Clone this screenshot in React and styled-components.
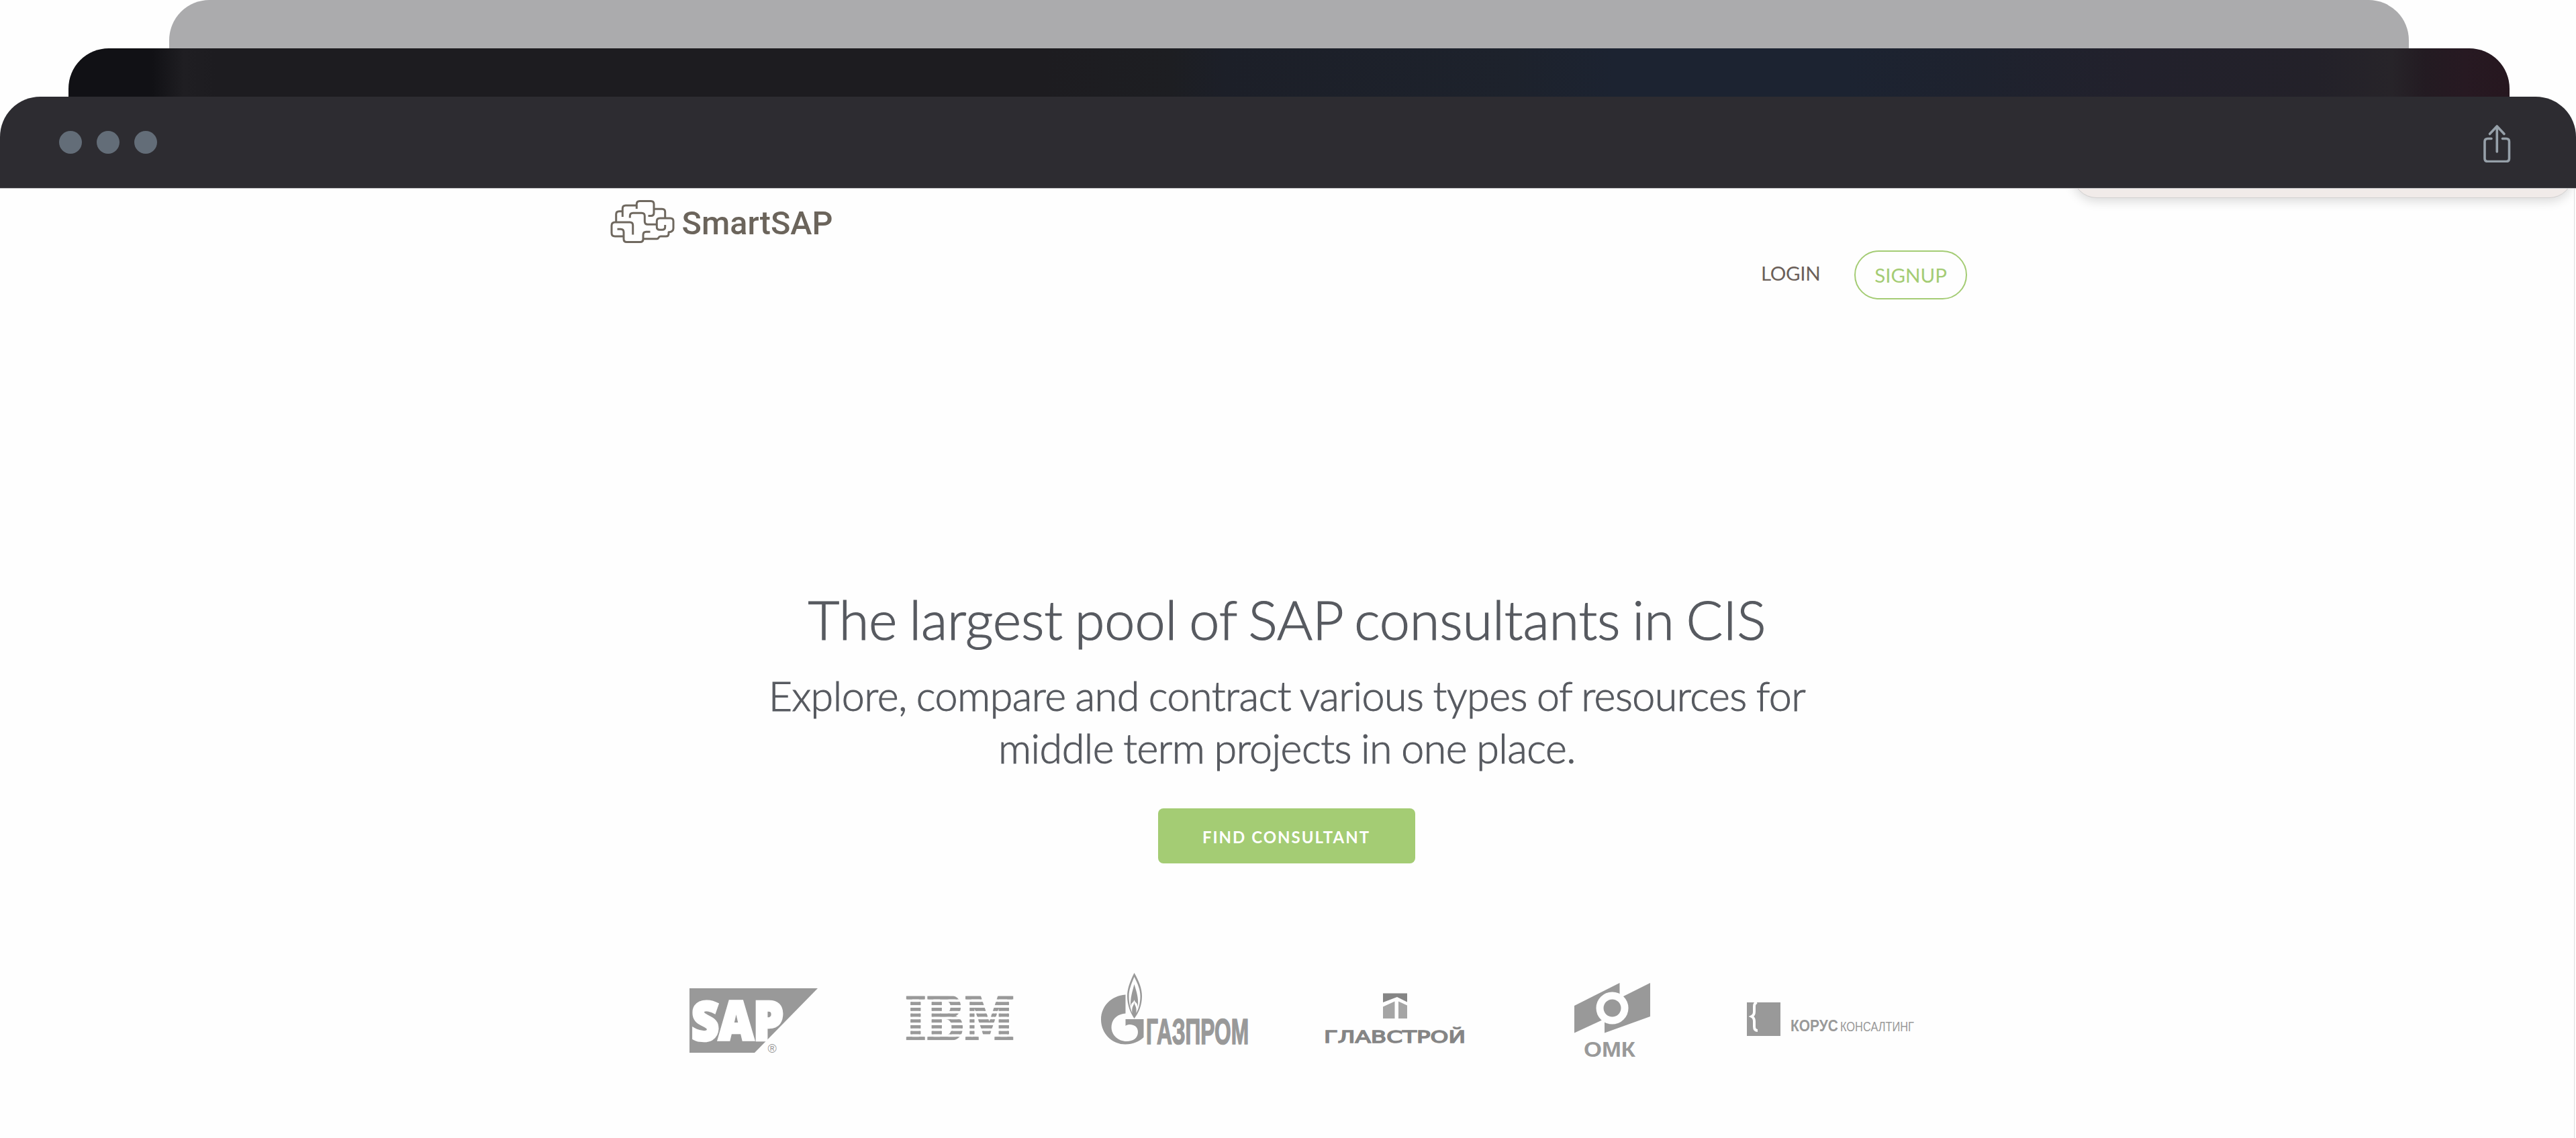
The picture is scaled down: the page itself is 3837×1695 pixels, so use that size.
import React from "react";
import styled, { createGlobalStyle } from "styled-components";

const GlobalStyle = createGlobalStyle`
  * { box-sizing: border-box; }
  html, body { margin: 0; padding: 0; background: #fff; }
  body { font-family: Lato, "Open Sans", sans-serif; overflow: hidden; }
`;

const Page = styled.div`
  width: 3837px;
  height: 1695px;
  display: flex;
  flex-direction: column;
  background: #fefefe;
  overflow: hidden;
`;

const BackTab = styled.div`
  height: 72px;
  flex: none;
  margin: 0 ${(p) => p.$right}px 0 ${(p) => p.$left}px;
  border-radius: 60px 60px 0 0;
  background: ${(p) => p.$fill};
`;

const darkBlend =
  "linear-gradient(90deg, #111115 0, #111115 125px, #1f1e22 172px, #1d1c20 220px, #1d1c20 1450px, #1d1e22 1640px, #1c1f28 1720px, #1d222c 2150px, #1c2331 2300px, #1c2331 2650px, #1e222e 2850px, #22212c 3080px, #232129 3350px, #272429 3460px, #231b22 3510px, #271922 3570px, #26171f 100%)";

const TitleBar = styled.header`
  height: 137px;
  flex: none;
  display: flex;
  align-items: center;
  justify-content: space-between;
  padding: 0 96px 0 88px;
  border-radius: 60px 60px 0 0;
  border-bottom: 1px solid #bdbdbf;
  background: #2d2c31;
  background-clip: padding-box;
`;

const Dots = styled.div`
  display: flex;
  gap: 22px;
`;

const Dot = styled.span`
  width: 34px;
  height: 34px;
  border-radius: 50%;
  background: #636d78;
`;

const ShareIcon = styled.svg`
  width: 44px;
  height: 60px;
  display: block;
`;

const Viewport = styled.main`
  position: relative;
  flex: 1;
  margin-right: 2px;
  border-right: 1px solid #dcdcdc;
  display: flex;
  flex-direction: column;
  overflow: hidden;
`;

const Popover = styled.div`
  position: absolute;
  top: -62px;
  left: 3087px;
  width: 746px;
  height: 76px;
  border: 1px solid #d2d0d0;
  border-radius: 36px;
  background: #f1ebe9;
  box-shadow: 0 5px 16px rgba(0, 0, 0, 0.14);
`;

const TopNav = styled.div`
  height: 170px;
  flex: none;
  display: flex;
  justify-content: space-between;
  padding: 0 904px 0 908px;
`;

const Brand = styled.a`
  display: block;
  padding-top: 15px;
`;

const Links = styled.nav`
  display: flex;
  align-items: flex-start;
  padding-top: 92px;
  gap: 54px;
`;

const NavLink = styled.a`
  margin-top: 16px;
  width: 85px;
  font-size: 29.5px;
  line-height: 36px;
  letter-spacing: -0.35px;
  color: #6b6059;
  white-space: nowrap;
`;

const SignupLink = styled.a`
  width: 168px;
  height: 73px;
  display: flex;
  align-items: center;
  justify-content: center;
  border: 2px solid #a4cc74;
  border-radius: 37px;
  font-size: 29.5px;
  letter-spacing: 0;
  color: #a4cc74;
`;

const Hero = styled.section`
  display: flex;
  flex-direction: column;
  align-items: center;
  padding-top: 421px;
`;

const Headline = styled.h1`
  margin: 0;
  font-size: 81px;
  font-weight: 300;
  line-height: 100px;
  letter-spacing: -0.1px;
  word-spacing: -4px;
  color: #575a60;
  -webkit-text-stroke: 1.2px #575a60;
  white-space: nowrap;
`;

const Lead = styled.p`
  margin: 25px 0 0;
  font-size: 61px;
  font-weight: 300;
  line-height: 78.4px;
  letter-spacing: -0.5px;
  word-spacing: -2px;
  text-align: center;
  color: #575a60;
  -webkit-text-stroke: 1px #575a60;
  white-space: nowrap;
`;

const FindButton = styled.button`
  margin: 50px 2px 0 0;
  width: 383px;
  height: 82px;
  border: 0;
  border-radius: 8px;
  background: #a4cc74;
  color: #fff;
  font-family: Lato, sans-serif;
  font-size: 24px;
  font-weight: 700;
  letter-spacing: 2px;
  padding: 4px 0 0;
  white-space: nowrap;
`;

const Clients = styled.section`
  margin-top: 154px;
  padding-left: 1027px;
  display: grid;
  grid-template-columns: 322px 291px 334px 371px 257px 250px;
  justify-items: start;
`;

const ClientLogo = styled.svg`
  display: block;
  width: ${(p) => p.$w}px;
  height: 140px;
  overflow: visible;
`;

const GREY = "#999";

const BrandMark = () => (
  <svg width="340" height="70" viewBox="0 0 340 70">
    <g fill="none" stroke="#6f685f" strokeWidth="3" strokeLinecap="butt" strokeLinejoin="round">
      <path d="M40.300 15V8q0-4.500 4.500-4.500H61.500q4.500 0 4.500 4.500V21q0 4.500-4.500 4.500H57.500" />
      <path d="M40.300 10H24q-4.700 0-4.700 4.700V27" />
      <path d="M19.300 18.700H14.200q-4.500 0-4.500 4.500V35" />
      <path d="M66 15.300H78.200q4.500 0 4.500 4.500V29" />
      <path d="M30.300 28.500V25.800q0-4.500 4.500-4.500H47.800q4.500 0 4.500 4.500V33.800q0 4.500 4.500 4.500H70" />
      <path d="M82.700 39V42q0 4.300-4.300 4.300H74.600q-4.300 0-4.300-4.300V33.500q0-4.500 4.500-4.500H90.500q4.500 0 4.500 4.500V44q0 5.500-7 5.700V52q0 4-4 4H76q-2 0-3 2t-3 1.700H50" />
      <path d="M60.500 49.300H54.500q-4.500 0-4.500 4.500V60q0 4.500-4.500 4.500H25.500q-4.500 0-4.500-4.500V49.800q0-4.500-4.500-4.500H11.500" />
      <path d="M21 56H8Q3 56 3 51V40q0-5 5-5H30.200q4.500 0 4.500 4.500V53.500" />
    </g>
    <text x="107.500" y="53" fontFamily="Roboto, sans-serif" fontWeight="500" fontSize="48.500" fill="#6b645b" textLength="225">SmartSAP</text>
  </svg>
);

const SapLogo = () => (
  <ClientLogo $w={191} viewBox="0 0 191 140">
    <path d="M0 32h191L97 128H0z" fill={GREY} />
    <text x="3" y="108.500" fontFamily="Open Sans, sans-serif" fontWeight="800" fontSize="80" fill="#fff" stroke="#fff" strokeWidth="4.500" textLength="137" lengthAdjust="spacingAndGlyphs">SAP</text>
    <text x="116.500" y="128" fontFamily="Liberation Sans, sans-serif" fontSize="18" fill={GREY}>®</text>
  </ClientLogo>
);

const IbmLogo = () => (
  <ClientLogo $w={160} viewBox="0 0 160 140">
    <defs>
      <pattern id="bars" width="400" height="8.67" patternUnits="userSpaceOnUse" x="-100" y="43.600">
        <rect width="400" height="4.800" fill={GREY} />
      </pattern>
    </defs>
    <text x="-1" y="109" fontFamily="DejaVu Serif, serif" fontWeight="700" fontSize="89.600" fill="url(#bars)" stroke="url(#bars)" strokeWidth="3.500" textLength="163" lengthAdjust="spacingAndGlyphs">IBM</text>
  </ClientLogo>
);

const GazpromLogo = () => (
  <ClientLogo $w={219} viewBox="0 0 219 140">
    <g fill={GREY}>
      <path d="M36.500 41.500C15 43 0 59 0 78.500C0 99 16 115.500 36 115.500C48 115.500 57 111 63.500 105V78H36.500V88C42 84 55 86 55 97C55 106 48 111 38 111C26 111 15.500 102 15.500 90C15.500 78 25 70 36.500 69.500Z" />
      <path fillRule="evenodd" d="M49.500 9C57 22 61 33 61 44C61 57 56 69 49.500 77C44 69 39 57 39 44C39 33 43 22 49.500 9ZM49.500 15C45 26 41.500 34 41.500 44C41.500 54 44 63 46.500 69C45.500 56 49.500 60 49.500 51C49.500 60 53.500 56 52.500 69C56 63 58.500 54 58.500 44C58.500 34 55 26 49.500 15Z" />
      <path d="M49.500 26C53 38 56 45 55 60C54 52 50.500 54 49.500 49C48.500 54 45 52 44 60C43.500 45 46.500 38 49.500 26Z" />
    </g>
    <text x="67" y="115" fontFamily="Liberation Sans Narrow, Liberation Sans, sans-serif" fontWeight="700" fontSize="53.500" fill={GREY} stroke={GREY} strokeWidth="1.600" textLength="153" lengthAdjust="spacingAndGlyphs">ГАЗПРОМ</text>
  </ClientLogo>
);

const GlavstroyLogo = () => (
  <ClientLogo $w={207} viewBox="0 0 207 140">
    <path d="M86 39.500h36v13l-15-7.500l-21 8z" fill="#858585" />
    <path d="M86 59.500l17.500-8v25.500H86zM109 51.500l13 6v19.500h-13z" fill="#a5a5a5" />
    <text x="-2" y="112.600" fontFamily="DejaVu Sans, sans-serif" fontSize="25.500" fill="#858585" stroke="#858585" strokeWidth="1.500" textLength="211" lengthAdjust="spacingAndGlyphs">ГЛАВСТРОЙ</text>
  </ClientLogo>
);

const OmkLogo = () => (
  <ClientLogo $w={113} viewBox="0 0 113 140">
    <path d="M0 58L67.500 24V41L41 79L40 80L0 98.500z" fill={GREY} />
    <path d="M72 44.500L113 24v50L45 98.500V82z" fill={GREY} />
    <ellipse cx="56.500" cy="61.500" rx="18.500" ry="18.500" fill={GREY} stroke="#fefefe" strokeWidth="11" />
    <text x="14" y="134" fontFamily="Liberation Sans, sans-serif" fontWeight="700" fontSize="31" fill={GREY} textLength="77" lengthAdjust="spacingAndGlyphs">ОМК</text>
  </ClientLogo>
);

const KorusLogo = () => (
  <ClientLogo $w={250} viewBox="0 0 250 140">
    <path d="M0 53h50v50H0z" fill={GREY} />
    <path d="M15 53q-4 1-4 6v8q0 5-4 7q4 2 4 7v8q0 6 5 6" fill="none" stroke="#fefefe" strokeWidth="4" />
    <text x="65" y="95.500" fontFamily="Liberation Sans Narrow, Liberation Sans, sans-serif" fontWeight="700" fontSize="24.500" fill={GREY} textLength="71" lengthAdjust="spacingAndGlyphs">КОРУС</text>
    <text x="139" y="95.500" fontFamily="Liberation Sans Narrow, Liberation Sans, sans-serif" fontSize="20.500" fill={GREY} textLength="110" lengthAdjust="spacingAndGlyphs">КОНСАЛТИНГ</text>
  </ClientLogo>
);

export default function App() {
  return (
    <>
      <GlobalStyle />
      <Page>
        <BackTab $left={252} $right={249} $fill="#ababad" />
        <BackTab $left={102} $right={99} $fill={darkBlend} />
        <TitleBar>
          <Dots>
            <Dot />
            <Dot />
            <Dot />
          </Dots>
          <ShareIcon viewBox="0 0 44 60" fill="none" stroke="#96a0a9" strokeWidth="3.600" strokeLinecap="round" strokeLinejoin="round">
            <path d="M14 24.500H8.500q-4.500 0-4.500 4.500v25q0 4.500 4.500 4.500h27.500q4.500 0 4.500-4.500v-25q0-4.500-4.500-4.500h-5.500" />
            <path d="M22.300 44V6M11.500 17.500L22.300 6L33 17.500" />
          </ShareIcon>
        </TitleBar>
        <Viewport>
          <Popover />
          <TopNav>
            <Brand><BrandMark /></Brand>
            <Links>
              <NavLink>LOGIN</NavLink>
              <SignupLink>SIGNUP</SignupLink>
            </Links>
          </TopNav>
          <Hero>
            <Headline>The largest pool of SAP consultants in CIS</Headline>
            <Lead>
              Explore, compare and contract various types of resources for
              <br />
              middle term projects in one place.
            </Lead>
            <FindButton>FIND CONSULTANT</FindButton>
          </Hero>
          <Clients>
            <SapLogo />
            <IbmLogo />
            <GazpromLogo />
            <GlavstroyLogo />
            <OmkLogo />
            <KorusLogo />
          </Clients>
        </Viewport>
      </Page>
    </>
  );
}
